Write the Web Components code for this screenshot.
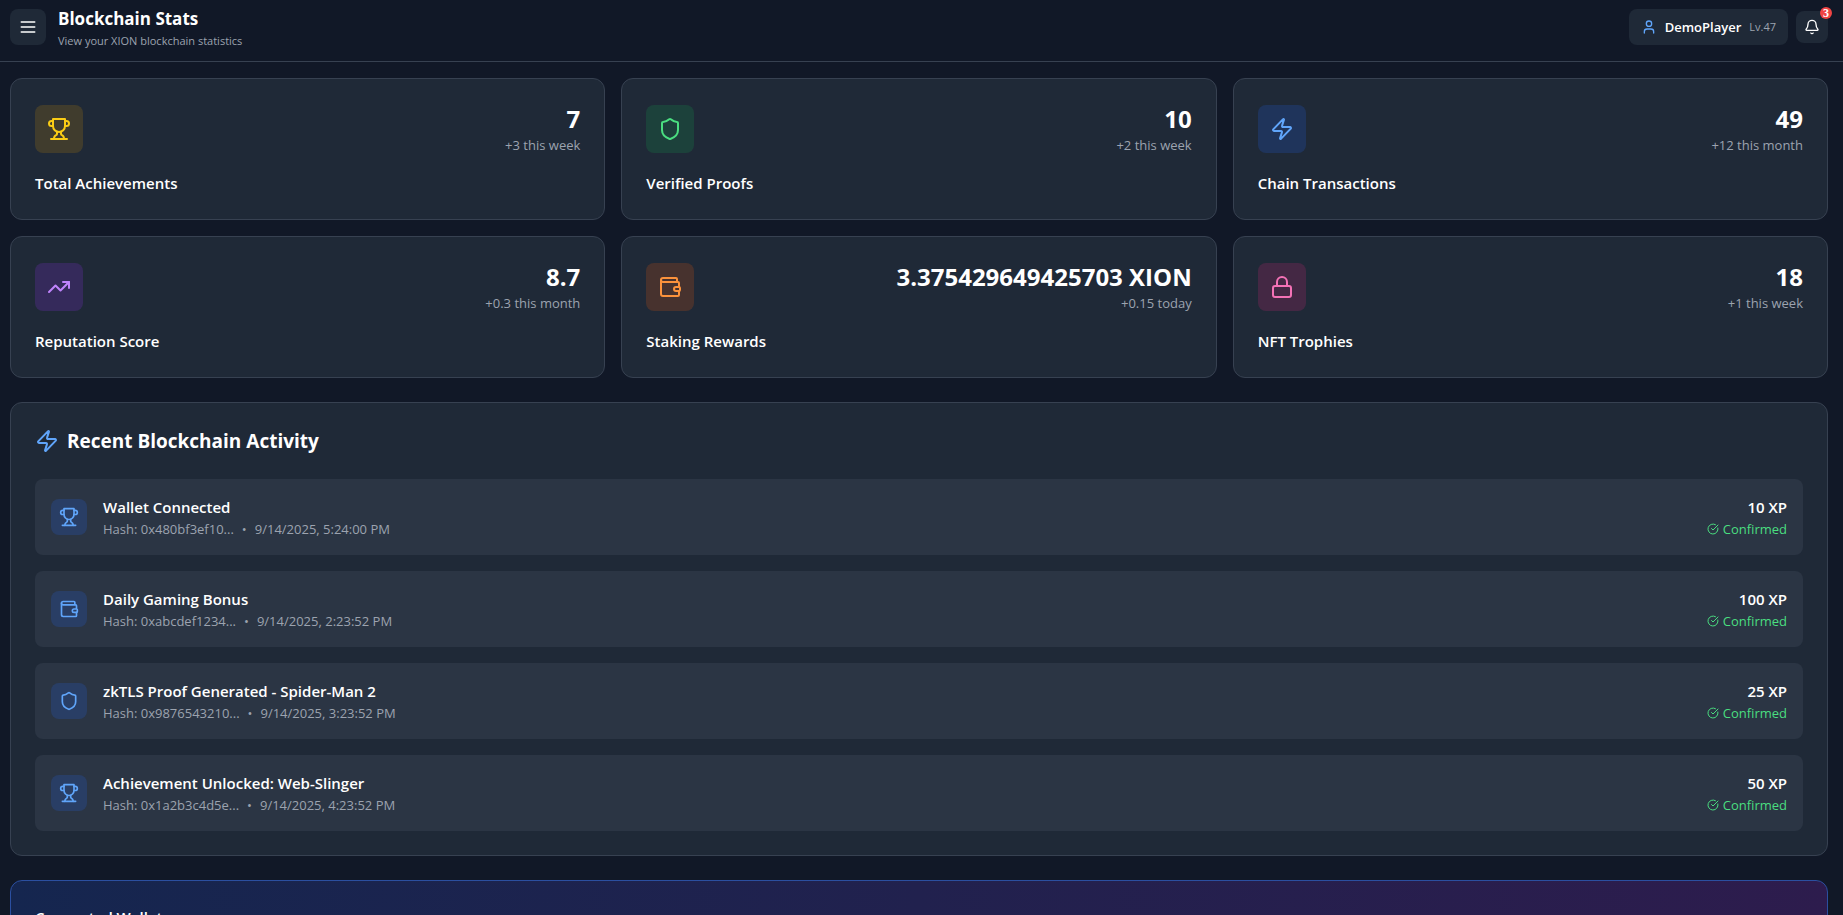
<!DOCTYPE html>
<html lang="en">
<head>
<meta charset="utf-8">
<title>Blockchain Stats</title>
<style>
  html {
    background: #111827;
    scrollbar-width: none;
  }

  body {
    margin: 0;
    color: #fff;
    font-family: "Segoe UI", "Open Sans", "Noto Sans", sans-serif;
    font-size: 15px;
    line-height: 24px;
    --color-card: #1f2937;
    --color-line: #374151;
    --color-muted: #9ca3af;
    --color-row: #2b3544;
    --color-blue: #60a5fa;
    --color-green: #4ade80;
  }

  main {
    display: flex;
    flex-direction: column;
    gap: 24px;
    padding: 16px 15px 24px 10px;
  }

  .stats {
    display: grid;
    grid-template-columns: repeat(3, 1fr);
    gap: 16px;
  }
</style>
</head>
<body>
<page-header heading="Blockchain Stats" subheading="View your XION blockchain statistics">
  <user-pill name="DemoPlayer" level="47"></user-pill>
  <notification-bell count="3"></notification-bell>
</page-header>

<main>
  <section class="stats" aria-label="Statistics">
    <stat-card icon="trophy" tone="yellow" value="7" change="+3 this week">Total Achievements</stat-card>
    <stat-card icon="shield" tone="green" value="10" change="+2 this week">Verified Proofs</stat-card>
    <stat-card icon="zap" tone="blue" value="49" change="+12 this month">Chain Transactions</stat-card>
    <stat-card icon="trending" tone="purple" value="8.7" change="+0.3 this month">Reputation Score</stat-card>
    <stat-card icon="wallet" tone="orange" value="3.375429649425703 XION" change="+0.15 today">Staking Rewards</stat-card>
    <stat-card icon="lock" tone="pink" value="18" change="+1 this week">NFT Trophies</stat-card>
  </section>

  <activity-panel heading="Recent Blockchain Activity">
    <activity-row icon="trophy" hash="0x480bf3ef10..." date="9/14/2025, 5:24:00 PM" xp="10">Wallet Connected</activity-row>
    <activity-row icon="wallet" hash="0xabcdef1234..." date="9/14/2025, 2:23:52 PM" xp="100">Daily Gaming Bonus</activity-row>
    <activity-row icon="shield" hash="0x9876543210..." date="9/14/2025, 3:23:52 PM" xp="25">zkTLS Proof Generated - Spider-Man 2</activity-row>
    <activity-row icon="trophy" hash="0x1a2b3c4d5e..." date="9/14/2025, 4:23:52 PM" xp="50">Achievement Unlocked: Web-Slinger</activity-row>
  </activity-panel>

  <wallet-panel>Connected Wallet</wallet-panel>
</main>

<script>
const ICONS = {
  menu: `<path d="M4 6h16M4 12h16M4 18h16"/>`,
  user: `<path d="M19 21v-2a4 4 0 0 0-4-4H9a4 4 0 0 0-4 4v2"/><circle cx="12" cy="7" r="4"/>`,
  bell: `<path d="M10.268 21a2 2 0 0 0 3.464 0"/><path d="M3.262 15.326A1 1 0 0 0 4 17h16a1 1 0 0 0 .74-1.673C19.41 13.956 18 12.499 18 8A6 6 0 0 0 6 8c0 4.499-1.411 5.956-2.738 7.326"/>`,
  trophy: `<path d="M6 9H4.5a2.5 2.5 0 0 1 0-5H6"/><path d="M18 9h1.5a2.5 2.5 0 0 0 0-5H18"/><path d="M4 22h16"/><path d="M10 14.66V17c0 .55-.47.98-.97 1.21C7.85 18.75 7 20.24 7 22"/><path d="M14 14.66V17c0 .55.47.98.97 1.21C16.15 18.75 17 20.24 17 22"/><path d="M18 2H6v7a6 6 0 0 0 12 0V2Z"/>`,
  shield: `<path d="M20 13c0 5-3.500 7.500-7.660 8.950a1 1 0 0 1-.67-.01C7.500 20.500 4 18 4 13V6a1 1 0 0 1 1-1c2 0 4.500-1.200 6.240-2.720a1.170 1.170 0 0 1 1.520 0C14.510 3.810 17 5 19 5a1 1 0 0 1 1 1z"/>`,
  zap: `<path d="M4 14a1 1 0 0 1-.78-1.630l9.900-10.200a.5.5 0 0 1 .86.460l-1.920 6.020A1 1 0 0 0 13 10h7a1 1 0 0 1 .78 1.630l-9.900 10.200a.5.5 0 0 1-.86-.460l1.920-6.020A1 1 0 0 0 11 14z"/>`,
  trending: `<path d="M16 7h6v6"/><path d="m22 7-8.500 8.500-5-5L2 17"/>`,
  wallet: `<path d="M19 7V4a1 1 0 0 0-1-1H5a2 2 0 0 0 0 4h15a1 1 0 0 1 1 1v4h-3a2 2 0 0 0 0 4h3a1 1 0 0 0 1-1v-2a1 1 0 0 0-1-1"/><path d="M3 5v14a2 2 0 0 0 2 2h15a1 1 0 0 0 1-1v-4"/>`,
  lock: `<rect width="18" height="11" x="3" y="11" rx="2"/><path d="M7 11V7a5 5 0 0 1 10 0v4"/>`,
  check: `<path d="M21.801 10A10 10 0 1 1 17 3.335"/><path d="m9 11 3 3L22 4"/>`,
};

// stroke colour, tile colour
const TONES = {
  yellow: ["#facc15", "#ca8a0433"],
  green: ["#4ade80", "#16a34a33"],
  blue: ["#60a5fa", "#2563eb33"],
  purple: ["#c084fc", "#9333ea33"],
  orange: ["#fb923c", "#ea580c33"],
  pink: ["#f472b6", "#db277733"],
};

class LineIcon extends HTMLElement {
  constructor() {
    super();
    this.attachShadow({ mode: "open" });
    const name = this.getAttribute("name");
    const size = this.getAttribute("size") || 24;

    this.shadowRoot.innerHTML = `
    <style>
      :host {
        display: block;
        flex: none;
      }

      svg {
        display: block;
      }
    </style>

    <svg width="${size}" height="${size}" viewBox="0 0 24 24" fill="none" stroke="currentColor"
      stroke-width="2" stroke-linecap="round" stroke-linejoin="round" aria-hidden="true">${ICONS[name]}</svg>`;
  }
}

class PageHeader extends HTMLElement {
  constructor() {
    super();
    this.attachShadow({ mode: "open" });

    this.shadowRoot.innerHTML = `
    <style>
      :host {
        display: block;
      }

      header {
        display: flex;
        align-items: center;
        gap: 12px;
        padding: 5px 15px 12px 10px;
        border-bottom: 1px solid var(--color-line);
      }

      button {
        padding: 8px;
        border: 0;
        border-radius: 8px;
        background: var(--color-card);
        color: #fff;
        cursor: pointer;
      }

      .titles {
        flex: 1;
      }

      h1 {
        margin: 0;
        font-size: 17px;
        line-height: 28px;
      }

      p {
        margin: 0;
        color: var(--color-muted);
        font-size: 11px;
        line-height: 16px;
      }

      .actions {
        display: flex;
        align-items: center;
        gap: 8px;
      }
    </style>

    <header>
      <button aria-label="Menu"><line-icon name="menu" size="20"></line-icon></button>
      <div class="titles">
        <h1>${this.getAttribute("heading")}</h1>
        <p>${this.getAttribute("subheading")}</p>
      </div>
      <div class="actions"><slot></slot></div>
    </header>`;
  }
}

class UserPill extends HTMLElement {
  constructor() {
    super();
    this.attachShadow({ mode: "open" });

    this.shadowRoot.innerHTML = `
    <style>
      :host {
        display: flex;
        align-items: center;
        gap: 8px;
        padding: 8px 12px;
        border-radius: 8px;
        background: var(--color-card);
        font-size: 13px;
        line-height: 20px;
      }

      line-icon {
        color: var(--color-blue);
      }

      b {
        font-weight: 600;
      }

      small {
        color: var(--color-muted);
        font-size: 11px;
      }
    </style>

    <line-icon name="user" size="16"></line-icon>
    <b>${this.getAttribute("name")}</b>
    <small>Lv.${this.getAttribute("level")}</small>`;
  }
}

class NotificationBell extends HTMLElement {
  constructor() {
    super();
    this.attachShadow({ mode: "open" });

    this.shadowRoot.innerHTML = `
    <style>
      :host {
        display: block;
      }

      button {
        display: block;
        position: relative;
        padding: 8px;
        border: 0;
        border-radius: 8px;
        background: var(--color-card);
        color: #fff;
        cursor: pointer;
      }

      .badge {
        position: absolute;
        top: -4px;
        right: -4px;
        width: 12px;
        border-radius: 50%;
        background: #ef4444;
        font-family: "Liberation Serif", serif;
        font-size: 12px;
        font-weight: 700;
        line-height: 12px;
        text-align: center;
      }
    </style>

    <button aria-label="Notifications">
      <line-icon name="bell" size="16"></line-icon>
      <span class="badge">${this.getAttribute("count")}</span>
    </button>`;
  }
}

class StatCard extends HTMLElement {
  constructor() {
    super();
    this.attachShadow({ mode: "open" });
    const [color, tile] = TONES[this.getAttribute("tone")];

    this.shadowRoot.innerHTML = `
    <style>
      :host {
        display: block;
        padding: 24px;
        border: 1px solid var(--color-line);
        border-radius: 12px;
        background: var(--color-card);
      }

      .top {
        display: flex;
        align-items: center;
        justify-content: space-between;
        margin-bottom: 16px;
      }

      .tile {
        padding: 12px;
        border-radius: 8px;
        background: ${tile};
        color: ${color};
      }

      .figures {
        text-align: right;
      }

      .value {
        font-size: 24px;
        font-weight: 700;
        line-height: 32px;
      }

      .change {
        color: var(--color-muted);
        font-size: 13px;
        line-height: 20px;
      }

      h3 {
        margin: 0;
        font-size: 15px;
        font-weight: 600;
      }
    </style>

    <div class="top">
      <div class="tile"><line-icon name="${this.getAttribute("icon")}"></line-icon></div>
      <div class="figures">
        <div class="value">${this.getAttribute("value")}</div>
        <div class="change">${this.getAttribute("change")}</div>
      </div>
    </div>
    <h3><slot></slot></h3>`;
  }
}

class ActivityPanel extends HTMLElement {
  constructor() {
    super();
    this.attachShadow({ mode: "open" });

    this.shadowRoot.innerHTML = `
    <style>
      :host {
        display: block;
        padding: 24px;
        border: 1px solid var(--color-line);
        border-radius: 12px;
        background: var(--color-card);
      }

      h2 {
        display: flex;
        align-items: center;
        gap: 8px;
        margin: 0 0 24px;
        font-size: 19px;
        line-height: 28px;
      }

      line-icon {
        color: var(--color-blue);
      }

      .rows {
        display: flex;
        flex-direction: column;
        gap: 16px;
      }
    </style>

    <h2><line-icon name="zap"></line-icon>${this.getAttribute("heading")}</h2>
    <div class="rows"><slot></slot></div>`;
  }
}

class ActivityRow extends HTMLElement {
  constructor() {
    super();
    this.attachShadow({ mode: "open" });

    this.shadowRoot.innerHTML = `
    <style>
      :host {
        display: flex;
        align-items: center;
        gap: 16px;
        padding: 16px;
        border-radius: 8px;
        background: var(--color-row);
      }

      .tile {
        padding: 8px;
        border-radius: 8px;
        background: #2563eb33;
        color: var(--color-blue);
      }

      .info {
        flex: 1;
      }

      h4 {
        margin: 0;
        font-size: 15px;
        font-weight: 600;
      }

      .meta, .status {
        display: flex;
        font-size: 13px;
        line-height: 20px;
      }

      .meta {
        gap: 8px;
        color: var(--color-muted);
      }

      .status {
        align-items: center;
        gap: 4px;
        color: var(--color-green);
      }

      .xp {
        font-weight: 600;
        text-align: right;
      }
    </style>

    <div class="tile"><line-icon name="${this.getAttribute("icon")}" size="20"></line-icon></div>
    <div class="info">
      <h4><slot></slot></h4>
      <div class="meta">
        <span>Hash: ${this.getAttribute("hash")}</span>
        <span>•</span>
        <span>${this.getAttribute("date")}</span>
      </div>
    </div>
    <div>
      <div class="xp">${this.getAttribute("xp")} XP</div>
      <div class="status"><line-icon name="check" size="12"></line-icon>Confirmed</div>
    </div>`;
  }
}

class WalletPanel extends HTMLElement {
  constructor() {
    super();
    this.attachShadow({ mode: "open" });

    this.shadowRoot.innerHTML = `
    <style>
      :host {
        display: block;
        padding: 24px;
        border: 1px solid #2b4fa0;
        border-radius: 12px;
        background: linear-gradient(to right, #15264f, #2d1c4d);
      }

      h3 {
        margin: 0;
        font-size: 15px;
        font-weight: 600;
      }
    </style>

    <h3><slot></slot></h3>`;
  }
}

customElements.define("line-icon", LineIcon);
customElements.define("page-header", PageHeader);
customElements.define("user-pill", UserPill);
customElements.define("notification-bell", NotificationBell);
customElements.define("stat-card", StatCard);
customElements.define("activity-panel", ActivityPanel);
customElements.define("activity-row", ActivityRow);
customElements.define("wallet-panel", WalletPanel);
</script>
</body>
</html>
